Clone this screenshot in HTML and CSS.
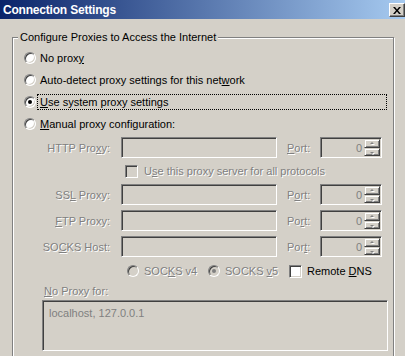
FILE: index.html
```html
<!DOCTYPE html>
<html lang="en">
  <head>
    <meta charset="utf-8"/>
    <title>Connection Settings</title>
    <link rel="stylesheet" href="styles.css">
  </head>
  <body>
    <div class="window">
      <div class="titlebar">
        <span class="titlebar__text">Connection Settings</span>
        <span class="titlebar__close">
          <svg width="8" height="7" viewBox="0 0 8 7">
            <path d="M0 0h2l2 2.5 2-2.5h2l-3 3.5 3 3.5h-2l-2-2.5-2 2.5h-2l3-3.5z" fill="#000"/>
          </svg>
        </span>
      </div>

      <div class="dialog">
        <div class="group">
          <div class="group__legend">Configure Proxies to Access the Internet</div>

          <div class="option">
            <span class="radio"></span>
            <span class="option__label">No prox<u>y</u></span>
          </div>
          <div class="option">
            <span class="radio"></span>
            <span class="option__label">Auto-detect proxy settings for this net<u>w</u>ork</span>
          </div>
          <div class="option option--focused">
            <span class="radio radio--checked"></span>
            <span class="option__label"><u>U</u>se system proxy settings</span>
          </div>
          <div class="option">
            <span class="radio"></span>
            <span class="option__label"><u>M</u>anual proxy configuration:</span>
          </div>

          <div class="manual">
            <div class="proxy-row">
              <span class="field-label is-disabled">HTTP Pro<u>x</u>y:</span>
              <span class="textbox textbox--host"></span>
              <span class="field-label field-label--port is-disabled"><u>P</u>ort:</span>
              <span class="textbox textbox--port">
                <span class="textbox__value">0</span>
                <span class="spinner"><span class="spinner__btn spinner__btn--up"></span><span class="spinner__btn spinner__btn--down"></span></span>
              </span>
            </div>

            <div class="check-row">
              <span class="checkbox checkbox--disabled"></span>
              <span class="check-row__label is-disabled">U<u>s</u>e this proxy server for all protocols</span>
            </div>

            <div class="proxy-row">
              <span class="field-label is-disabled">SS<u>L</u> Proxy:</span>
              <span class="textbox textbox--host"></span>
              <span class="field-label field-label--port is-disabled">P<u>o</u>rt:</span>
              <span class="textbox textbox--port">
                <span class="textbox__value">0</span>
                <span class="spinner"><span class="spinner__btn spinner__btn--up"></span><span class="spinner__btn spinner__btn--down"></span></span>
              </span>
            </div>
            <div class="proxy-row">
              <span class="field-label is-disabled"><u>F</u>TP Proxy:</span>
              <span class="textbox textbox--host"></span>
              <span class="field-label field-label--port is-disabled">Po<u>r</u>t:</span>
              <span class="textbox textbox--port">
                <span class="textbox__value">0</span>
                <span class="spinner"><span class="spinner__btn spinner__btn--up"></span><span class="spinner__btn spinner__btn--down"></span></span>
              </span>
            </div>
            <div class="proxy-row">
              <span class="field-label is-disabled">SO<u>C</u>KS Host:</span>
              <span class="textbox textbox--host"></span>
              <span class="field-label field-label--port is-disabled">Por<u>t</u>:</span>
              <span class="textbox textbox--port">
                <span class="textbox__value">0</span>
                <span class="spinner"><span class="spinner__btn spinner__btn--up"></span><span class="spinner__btn spinner__btn--down"></span></span>
              </span>
            </div>

            <div class="socks-row">
              <span class="socks-row__item">
                <span class="radio radio--disabled"></span>
                <span class="socks-row__label is-disabled">SOC<u>K</u>S v4</span>
              </span>
              <span class="socks-row__item">
                <span class="radio radio--disabled radio--checked"></span>
                <span class="socks-row__label is-disabled">SOCKS <u>v</u>5</span>
              </span>
              <span class="socks-row__item">
                <span class="checkbox"></span>
                <span class="socks-row__label">Remote <u>D</u>NS</span>
              </span>
            </div>

            <div class="no-proxy__label is-disabled"><u>N</u>o Proxy for:</div>
            <div class="no-proxy__box">localhost, 127.0.0.1</div>
          </div>
        </div>
      </div>
    </div>
  </body>
</html>
```

FILE: styles.css
```css
html, body {
  margin: 0;
  padding: 0;
  height: 100%;
  overflow: hidden;
}

body {
  background: #D4D0C8;
  font-family: 'Liberation Sans', Arial, sans-serif;
  font-size: 11px;
  line-height: 14px;
  color: #000;
}

u {
  text-decoration: underline;
  text-underline-offset: 1px;
}

.is-disabled {
  color: #808080;
  text-shadow: 1px 1px 0 #FFF;
}

/* title bar */

.titlebar {
  display: flex;
  align-items: center;
  height: 19px;
  padding-left: 3px;
  background: linear-gradient(to right, #0A246A, #A6CAF0);
}

.titlebar__text {
  flex: 1;
  color: #FFF;
  font-size: 12px;
  font-weight: 700;
  letter-spacing: -0.2px;
}

.titlebar__close {
  display: flex;
  align-items: center;
  justify-content: center;
  box-sizing: border-box;
  width: 16px;
  height: 14px;
  margin-top: 1px;
  background: #D4D0C8;
  border: 1px solid;
  border-color: #FFF #404040 #404040 #FFF;
  box-shadow: inset -1px -1px #808080;
}

/* group box */

.dialog {
  padding: 18px 11px 0 12px;
}

.group {
  border: 1px solid #808080;
  box-shadow: inset 1px 1px #FFF, 1px 1px #FFF;
  padding-bottom: 20px;
}

.group__legend {
  display: table;
  margin: -8px 0 3px 5px;
  padding: 0 2px;
  background: #D4D0C8;
}

.option {
  display: flex;
  align-items: center;
  height: 22px;
  padding-left: 11px;
  margin-right: 6px;
}

.option__label {
  flex: 1;
  margin-left: 1px;
  padding: 0 2px;
  border: 1px dotted transparent;
}

.option--focused .option__label {
  border-color: #000;
}

/* radio / checkbox */

.radio {
  position: relative;
  box-sizing: border-box;
  width: 12px;
  height: 12px;
  flex: none;
  border-radius: 50%;
  background: #FFF;
  border: 1px solid;
  border-color: #808080 #FFF #FFF #808080;
  box-shadow: inset 1px 1px #404040, inset -1px -1px #D4D0C8;
}

.radio--checked::after {
  content: '';
  position: absolute;
  left: 3px;
  top: 3px;
  width: 4px;
  height: 4px;
  border-radius: 50%;
  background: #000;
}

.radio--disabled {
  background: #D4D0C8;
}

.radio--disabled.radio--checked::after {
  background: #808080;
}

.checkbox {
  box-sizing: border-box;
  width: 13px;
  height: 13px;
  flex: none;
  background: #FFF;
  border: 1px solid;
  border-color: #808080 #FFF #FFF #808080;
  box-shadow: inset 1px 1px #404040, inset -1px -1px #D4D0C8;
}

.checkbox--disabled {
  background: #D4D0C8;
}

/* manual proxy rows */

.manual {
  margin-top: 2px;
}

.proxy-row {
  display: flex;
  align-items: center;
  height: 21px;
  padding-left: 27px;
}

.proxy-row + .proxy-row {
  margin-top: 5px;
}

.field-label {
  width: 70px;
  margin-right: 11px;
  text-align: right;
  white-space: nowrap;
}

.field-label--port {
  width: 33px;
  margin: 0;
  text-align: left;
}

.textbox {
  display: flex;
  align-items: center;
  box-sizing: border-box;
  height: 21px;
  background: #D4D0C8;
  border: 1px solid;
  border-color: #808080 #FFF #FFF #808080;
  box-shadow: inset 1px 1px #404040, inset -1px -1px #D4D0C8;
}

.textbox--host {
  width: 156px;
  margin-right: 10px;
}

.textbox--port {
  width: 62px;
  justify-content: flex-end;
  padding-right: 1px;
}

.textbox__value {
  margin-right: 2px;
  color: #808080;
}

.spinner {
  display: flex;
  flex-direction: column;
  width: 16px;
  height: 17px;
}

.spinner__btn {
  position: relative;
  flex: 1;
  box-sizing: border-box;
  background: #D4D0C8;
  border: 1px solid;
  border-color: #D4D0C8 #404040 #404040 #D4D0C8;
  box-shadow: inset 1px 1px #FFF, inset -1px -1px #808080;
}

.spinner__btn::after {
  content: '';
  position: absolute;
  left: 5px;
  width: 0;
  height: 0;
  border-left: 2px solid transparent;
  border-right: 2px solid transparent;
  filter: drop-shadow(1px 1px 0 #FFF);
}

.spinner__btn--up::after {
  top: 2px;
  border-bottom: 2px solid #808080;
}

.spinner__btn--down::after {
  top: 3px;
  border-top: 2px solid #808080;
}

.check-row {
  display: flex;
  align-items: center;
  height: 26px;
  padding-left: 112px;
}

.check-row__label {
  margin-left: 6px;
}

.socks-row {
  display: flex;
  align-items: center;
  height: 26px;
  padding-left: 114px;
  margin-top: 1px;
}

.socks-row__item {
  display: flex;
  align-items: center;
  width: 81px;
}

.socks-row__label {
  margin-left: 5px;
  white-space: nowrap;
}

.no-proxy__label {
  padding-left: 31px;
  margin-bottom: 2px;
}

.no-proxy__box {
  box-sizing: border-box;
  width: 346px;
  height: 51px;
  margin-left: 29px;
  padding: 5px 6px;
  color: #808080;
  background: #D4D0C8;
  border: 1px solid;
  border-color: #808080 #FFF #FFF #808080;
  box-shadow: inset 1px 1px #404040, inset -1px -1px #D4D0C8;
}
```
